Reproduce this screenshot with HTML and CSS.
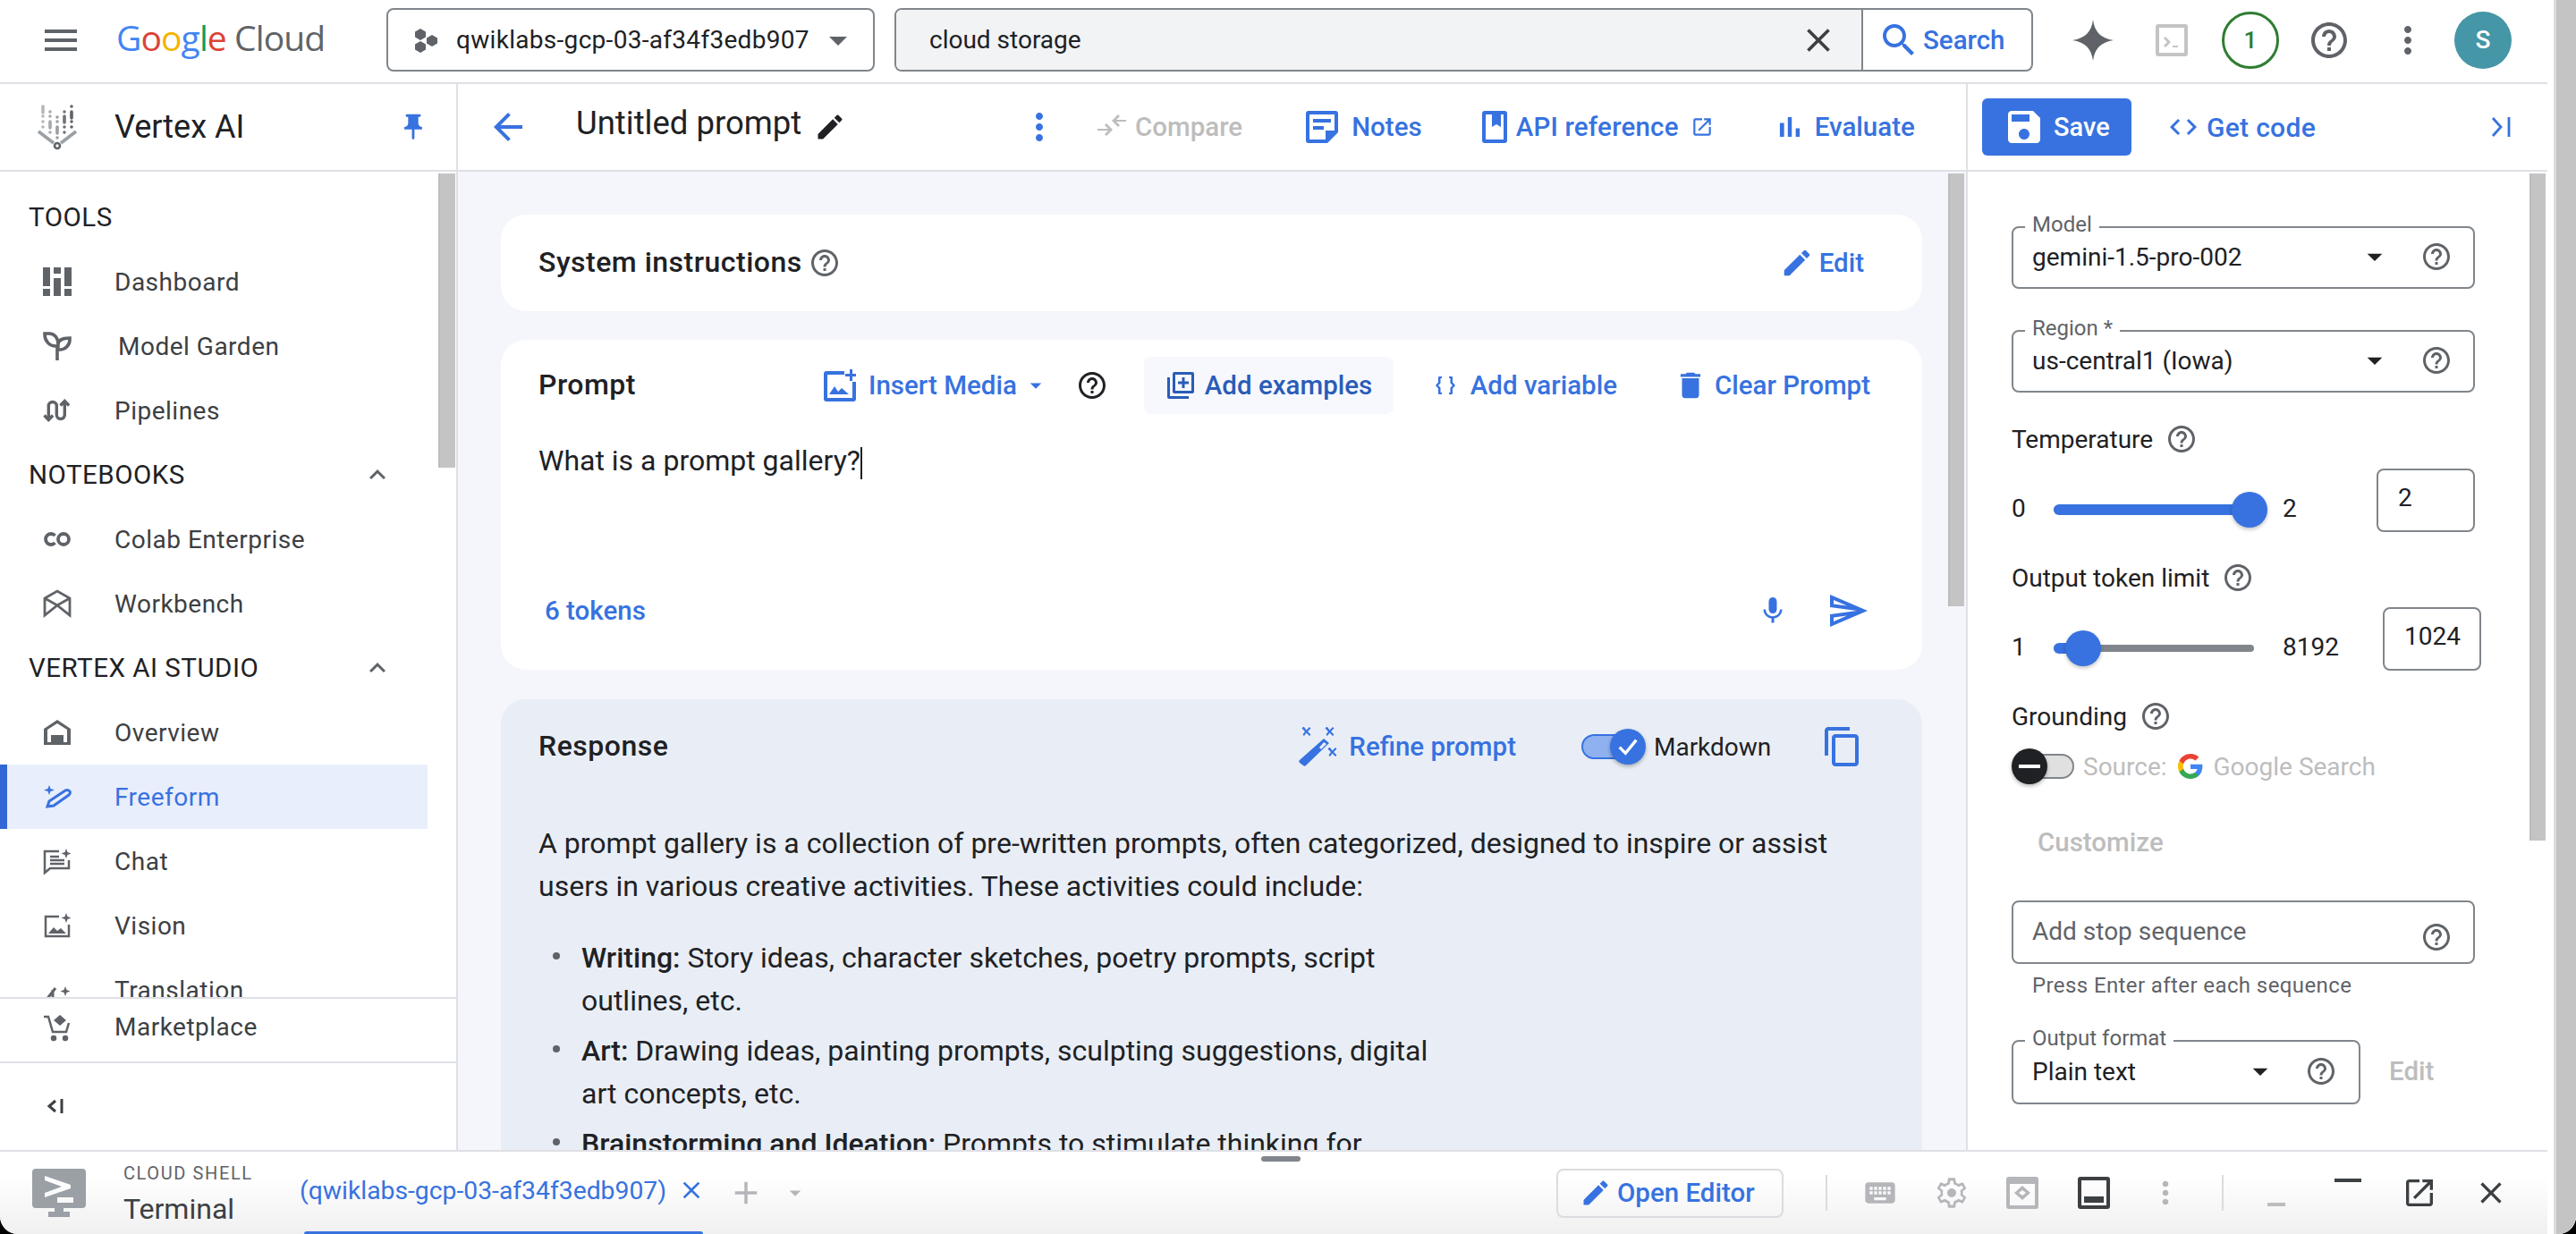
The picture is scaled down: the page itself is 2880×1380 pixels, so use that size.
FILE: index.html
```html
<!DOCTYPE html>
<html lang="en">
<head>
<meta charset="utf-8">
<title>Vertex AI Freeform</title>
<link rel="stylesheet" href="styles.css">
</head>
<body>
<svg class="sprite" xmlns="http://www.w3.org/2000/svg">
<symbol id="i-menu" viewBox="0 0 24 24"><path d="M3 18h18v-2H3v2zm0-5h18v-2H3v2zm0-7v2h18V6H3z"/></symbol>
<symbol id="i-help" viewBox="0 0 24 24"><path d="M11 18h2v-2h-2v2zm1-16C6.48 2 2 6.48 2 12s4.48 10 10 10 10-4.48 10-10S17.52 2 12 2zm0 18c-4.41 0-8-3.59-8-8s3.59-8 8-8 8 3.59 8 8-3.59 8-8 8zm0-14c-2.21 0-4 1.79-4 4h2c0-1.1.9-2 2-2s2 .9 2 2c0 2-3 1.75-3 5h2c0-2.25 3-2.5 3-5 0-2.21-1.79-4-4-4z"/></symbol>
<symbol id="i-more" viewBox="0 0 24 24"><path d="M12 8c1.1 0 2-.9 2-2s-.9-2-2-2-2 .9-2 2 .9 2 2 2zm0 2c-1.1 0-2 .9-2 2s.9 2 2 2 2-.9 2-2-.9-2-2-2zm0 6c-1.1 0-2 .9-2 2s.9 2 2 2 2-.9 2-2-.9-2-2-2z"/></symbol>
<symbol id="i-close" viewBox="0 0 24 24"><path d="M19 6.41L17.59 5 12 10.59 6.41 5 5 6.41 10.59 12 5 17.59 6.41 19 12 13.41 17.59 19 19 17.59 13.41 12z"/></symbol>
<symbol id="i-search" viewBox="0 0 24 24"><path d="M15.5 14h-.79l-.28-.27C15.41 12.59 16 11.11 16 9.5 16 5.91 13.09 3 9.5 3S3 5.91 3 9.5 5.91 16 9.5 16c1.61 0 3.09-.59 4.23-1.57l.27.28v.79l5 4.99L20.49 19l-4.99-5zm-6 0C7.01 14 5 11.99 5 9.5S7.01 5 9.5 5 14 7.01 14 9.5 11.99 14 9.5 14z"/></symbol>
<symbol id="i-edit" viewBox="0 0 24 24"><path d="M3 17.25V21h3.75L17.81 9.94l-3.75-3.75L3 17.25zM20.71 7.04c.39-.39.39-1.02 0-1.41l-2.34-2.34c-.39-.39-1.02-.39-1.41 0l-1.83 1.83 3.75 3.75 1.83-1.83z"/></symbol>
<symbol id="i-back" viewBox="0 0 24 24"><path d="M20 11H7.83l5.59-5.59L12 4l-8 8 8 8 1.41-1.41L7.83 13H20v-2z"/></symbol>
<symbol id="i-drop" viewBox="0 0 24 24"><path d="M7 10l5 5 5-5z"/></symbol>
<symbol id="i-less" viewBox="0 0 24 24"><path d="M12 8l-6 6 1.41 1.41L12 10.83l4.59 4.58L18 14z"/></symbol>
<symbol id="i-pin" viewBox="0 0 24 24"><path d="M16 9V4h1c.55 0 1-.45 1-1s-.45-1-1-1H7c-.55 0-1 .45-1 1s.45 1 1 1h1v5c0 1.66-1.34 3-3 3v2h5.97v7l1 1 1-1v-7H19v-2c-1.66 0-3-1.34-3-3z"/></symbol>
<symbol id="i-delete" viewBox="0 0 24 24"><path d="M6 19c0 1.1.9 2 2 2h8c1.1 0 2-.9 2-2V7H6v12zM19 4h-3.5l-1-1h-5l-1 1H5v2h14V4z"/></symbol>
<symbol id="i-send" viewBox="0 0 24 24"><path d="M4.01 6.03l7.51 3.22-7.52-1 .01-2.22m7.5 8.72L4 17.97v-2.22l7.51-1M2.01 3L2 10l15 2-15 2 .01 7L23 12 2.01 3z"/></symbol>
<symbol id="i-mic" viewBox="0 0 24 24"><path d="M12 14c1.66 0 2.99-1.34 2.99-3L15 5c0-1.66-1.34-3-3-3S9 3.34 9 5v6c0 1.66 1.34 3 3 3zm5.3-3c0 3-2.54 5.1-5.3 5.1S6.7 14 6.7 11H5c0 3.41 2.72 6.23 6 6.72V21h2v-3.28c3.28-.48 6-3.3 6-6.72h-1.7z"/></symbol>
<symbol id="i-copy" viewBox="0 0 24 24"><path d="M16 1H4c-1.1 0-2 .9-2 2v14h2V3h12V1zm3 4H8c-1.1 0-2 .9-2 2v14c0 1.1.9 2 2 2h11c1.1 0 2-.9 2-2V7c0-1.1-.9-2-2-2zm0 16H8V7h11v14z"/></symbol>
<symbol id="i-save" viewBox="0 0 24 24"><path d="M17 3H5c-1.11 0-2 .9-2 2v14c0 1.1.89 2 2 2h14c1.1 0 2-.9 2-2V7l-4-4zm-5 16c-1.66 0-3-1.34-3-3s1.34-3 3-3 3 1.34 3 3-1.34 3-3 3zm3-10H5V5h10v4z"/></symbol>
<symbol id="i-code" viewBox="0 0 24 24"><path d="M9.4 16.6L4.8 12l4.6-4.6L8 6l-6 6 6 6 1.4-1.4zm5.2 0l4.6-4.6-4.6-4.6L16 6l6 6-6 6-1.4-1.4z"/></symbol>
<symbol id="i-chart" viewBox="0 0 24 24"><path d="M5 9.2h3V19H5zM10.6 5h2.8v14h-2.8zm5.6 8H19v6h-2.8z"/></symbol>
<symbol id="i-open" viewBox="0 0 24 24"><path d="M19 19H5V5h7V3H5c-1.11 0-2 .9-2 2v14c0 1.1.89 2 2 2h14c1.1 0 2-.9 2-2v-7h-2v7zM14 3v2h3.59l-9.83 9.83 1.41 1.41L19 6.41V10h2V3h-7z"/></symbol>
<symbol id="i-settings" viewBox="0 0 24 24"><path fill-rule="evenodd" d="M19.43 12.98c.04-.32.07-.64.07-.98 0-.34-.03-.66-.07-.98l2.11-1.65c.19-.15.24-.42.12-.64l-2-3.46c-.09-.16-.26-.25-.44-.25-.06 0-.12.01-.17.03l-2.49 1c-.52-.4-1.08-.73-1.69-.98l-.38-2.65C14.46 2.18 14.25 2 14 2h-4c-.25 0-.46.18-.49.42l-.38 2.65c-.61.25-1.17.59-1.69.98l-2.49-1c-.06-.02-.12-.03-.18-.03-.17 0-.34.09-.43.25l-2 3.46c-.13.22-.07.49.12.64l2.11 1.65c-.04.32-.07.65-.07.98 0 .33.03.66.07.98l-2.11 1.65c-.19.15-.24.42-.12.64l2 3.46c.09.16.26.25.44.25.06 0 .12-.01.17-.03l2.49-1c.52.4 1.08.73 1.69.98l.38 2.65c.03.24.24.42.49.42h4c.25 0 .46-.18.49-.42l.38-2.65c.61-.25 1.17-.59 1.69-.98l2.49 1c.06.02.12.03.18.03.17 0 .34-.09.43-.25l2-3.46c.12-.22.07-.49-.12-.64l-2.11-1.65zM18 12c0 .3-.03.6-.08.9l-.14.8 2.1 1.6-1 1.7-2.4-1-.7.5c-.5.4-1 .7-1.6.9l-.8.3-.38 2.4h-2l-.36-2.4-.8-.3c-.6-.2-1.1-.5-1.6-.9l-.7-.5-2.4 1-1-1.7 2.1-1.6-.14-.8c-.05-.3-.08-.6-.08-.9s.03-.6.08-.9l.14-.8-2.1-1.6 1-1.7 2.4 1 .7-.5c.5-.4 1-.7 1.6-.9l.8-.3.36-2.4h2l.38 2.4.8.3c.6.2 1.1.5 1.6.9l.7.5 2.4-1 1 1.7-2.1 1.6.14.8c.05.3.08.6.08.9zm-6-3a3 3 0 1 0 0 6 3 3 0 0 0 0-6z"/></symbol>
<symbol id="i-keyboard" viewBox="0 0 24 24"><path d="M20 5H4c-1.1 0-1.99.9-1.99 2L2 17c0 1.1.9 2 2 2h16c1.1 0 2-.9 2-2V7c0-1.1-.9-2-2-2zm-9 3h2v2h-2V8zm0 3h2v2h-2v-2zM8 8h2v2H8V8zm0 3h2v2H8v-2zm-1 2H5v-2h2v2zm0-3H5V8h2v2zm9 7H8v-2h8v2zm0-4h-2v-2h2v2zm0-3h-2V8h2v2zm3 3h-2v-2h2v2zm0-3h-2V8h2v2z"/></symbol>
<symbol id="i-add" viewBox="0 0 24 24"><path d="M19 13h-6v6h-2v-6H5v-2h6V5h2v6h6v2z"/></symbol>
<symbol id="i-spark" viewBox="0 0 24 24"><path d="M12 0c.9 7 4.4 10.8 12 12-7.6 1.2-11.1 5-12 12-.9-7-4.4-10.8-12-12C7.6 10.800 11.100 7 12 0z"/></symbol>
<symbol id="i-project" viewBox="0 0 28 28"><path d="M8 1l6 3.500v6L8 14l-6-3.500v-6zM21 8l6 3.500v6L21 21l-6-3.500v-6zM8 15l6 3.500v6L8 28l-6-3.500v-6z"/></symbol>
<symbol id="i-termbox" viewBox="0 0 36 36"><path fill-rule="evenodd" d="M3 0h30a3 3 0 0 1 3 3v30a3 3 0 0 1-3 3H3a3 3 0 0 1-3-3V3a3 3 0 0 1 3-3zm1 4v28h28V4zm5 12l2-2 6 6-6 6-2-2 4-4zm10 8h6v2h-6z"/></symbol>
<symbol id="i-notes" viewBox="0 0 36 36"><path fill-rule="evenodd" d="M3 0h30a3 3 0 0 1 3 3v21L24 36H3a3 3 0 0 1-3-3V3a3 3 0 0 1 3-3zm1 4v28h18v-10h10V4zm4 5h20v4H8zm0 8h12v4H8z"/></symbol>
<symbol id="i-book" viewBox="0 0 28 36"><path fill-rule="evenodd" d="M3 0h22a3 3 0 0 1 3 3v30a3 3 0 0 1-3 3H3a3 3 0 0 1-3-3V3a3 3 0 0 1 3-3zm1 4v28h20V4h-3v14l-5-3-5 3V4z"/></symbol>
<symbol id="i-compare" viewBox="0 0 32 32"><path d="M0 18h12l-4-4 2-2 7 7-7 7-2-2 4-4H0zM32 10H21l4 4-2 2-7-7 7-7 2 2-4 4h11z"/></symbol>
<symbol id="i-media" viewBox="0 0 36 36"><path fill-rule="evenodd" d="M3 2h20v4H4v26h28V14h4v19a3 3 0 0 1-3 3H3a3 3 0 0 1-3-3V5a3 3 0 0 1 3-3zm26-2h3v5h4v3h-4v5h-3V8h-5V5h5zM6 28l6-9 4 6 4-4 8 7z"/></symbol>
<symbol id="i-examples" viewBox="0 0 30 30"><path fill-rule="evenodd" d="M8 0h20a2 2 0 0 1 2 2v20a2 2 0 0 1-2 2H8a2 2 0 0 1-2-2V2a2 2 0 0 1 2-2zm1 3v18h18V3zM0 6h3v21h21v3H2a2 2 0 0 1-2-2zm16.500 0h3v4.500H24v3h-4.500V18h-3v-4.500H12v-3h4.500z"/></symbol>
<symbol id="i-braces" viewBox="0 0 26 26"><path d="M6 3h3v2H7.500v5.500L5 13l2.500 2.500V21H9v2H6a1 1 0 0 1-1-1v-5.500L2 13l3-3.500V4a1 1 0 0 1 1-1zM20 3h-3v2h1.500v5.500L21 13l-2.500 2.500V21H17v2h3a1 1 0 0 0 1-1v-5.500L24 13l-3-3.500V4a1 1 0 0 0-1-1z"/></symbol>
<symbol id="i-wand" viewBox="0 0 44 44"><path fill-rule="evenodd" d="M29 13l6 5L9 43c-1 1-2 1-3 0l-4-3c-1-1-1-2 0-3zm0 4l-5 6 2 2 6-6z"/><path d="M7 0l2.500 3.500L13 0l1.500 1.500L11 5l3.500 3.500L13 10 9.500 6.500 7 10 5.500 8.500 8 5 4.500 1.500 6 0zM33 0l2.500 3.500L39 0l1.500 1.500L37 5l3.500 3.500L39 10l-3.500-3.500L33 10l-1.500-1.500L34 5l-3.500-3.500L32 0zM36 23l2.500 3.500L42 23l1.500 1.500L40 28l3.500 3.500L42 33l-3.500-3.500L36 33l-1.500-1.500L37 28l-3.500-3.500L35 23z"/></symbol>
<symbol id="i-webview" viewBox="0 0 36 36"><path fill-rule="evenodd" d="M3 0h30a3 3 0 0 1 3 3v30a3 3 0 0 1-3 3H3a3 3 0 0 1-3-3V3a3 3 0 0 1 3-3zm1 8v24h28V8zm14 2l9 8-9 8-9-8zm0 5l-4 3 4 3 4-3z"/></symbol>
<symbol id="i-dock" viewBox="0 0 36 36"><path fill-rule="evenodd" d="M3 0h30a3 3 0 0 1 3 3v30a3 3 0 0 1-3 3H3a3 3 0 0 1-3-3V3a3 3 0 0 1 3-3zm1 4v28h28V4zm3 18h22v7H7z"/></symbol>
</svg>

<div class="screen">
  <div class="window">
    <header class="topbar">
      <svg class="ic ic-48 c-grey m-menu"><use href="#i-menu"/></svg>
      <div class="logo"><span class="g-b">G</span><span class="g-r">o</span><span class="g-y">o</span><span class="g-b">g</span><span class="g-g">l</span><span class="g-r">e</span><span class="g-c"> Cloud</span></div>
      <div class="project">
        <svg class="ic project-ic c-grey"><use href="#i-project"/></svg>
        <span class="project-name">qwiklabs-gcp-03-af34f3edb907</span>
        <svg class="ic ic-48 c-grey project-arrow"><use href="#i-drop"/></svg>
      </div>
      <div class="search">
        <div class="search-field">
          <span class="search-text">cloud storage</span>
          <svg class="ic ic-44 c-dark"><use href="#i-close"/></svg>
        </div>
        <div class="search-btn">
          <svg class="ic ic-48 c-blue"><use href="#i-search"/></svg>
          <span>Search</span>
        </div>
      </div>
      <svg class="ic spark c-grey"><use href="#i-spark"/></svg>
      <svg class="ic termbox"><use href="#i-termbox"/></svg>
      <div class="notif">1</div>
      <svg class="ic ic-48 c-grey m-help"><use href="#i-help"/></svg>
      <svg class="ic ic-48 c-grey m-more"><use href="#i-more"/></svg>
      <div class="avatar">S</div>
    </header>

    <div class="work">
      <aside class="left">
        <div class="left-head">
          <svg class="vertex" viewBox="0 0 44 50" fill="none" stroke-linecap="round" stroke-width="3.600">
            <path stroke="#b4b7bb" d="M6 2v7M6 13v0M6 19v0M6 25v0"/>
            <path stroke="#a6a9ae" d="M14 8v0M14 13v0M14 19v7M14 31v0"/>
            <path stroke="#9a9da2" d="M22 14v0M22 19v0M22 25v7M22 37v0"/>
            <path stroke="#6f7378" d="M30 8v0M30 13v7M30 25v0M30 31v0"/>
            <path stroke="#5f6368" d="M38 2v0M38 8v7M38 19v0M38 25v0"/>
            <path stroke="#9aa0a6" stroke-width="3.600" stroke-linecap="butt" d="M1 30l17 13M43 30L26 43"/>
            <circle cx="22" cy="46" r="3" stroke="#5f6368" stroke-width="2.600"/>
          </svg>
          <span class="vertex-name">Vertex AI</span>
          <svg class="ic ic-34 c-blue"><use href="#i-pin"/></svg>
        </div>
        <div class="nav-scroll">
          <nav class="nav">
            <div class="nav-head"><span>TOOLS</span></div>
            <div class="nav-row">
              <svg class="nav-ic" viewBox="0 0 32 32" fill="currentColor"><path d="M0 0h8v21H0zM0 24h8v8H0zM12 0h8v7h-8zM12 12h8v20h-8zM24 0h8v21h-8zM24 24h8v8h-8z"/></svg>
              <span>Dashboard</span>
            </div>
            <div class="nav-row nav-row-garden">
              <svg class="nav-ic" viewBox="0 0 32 32" fill="none" stroke="currentColor" stroke-width="3.600"><path d="M2 2h5c6 0 10 5 10 12v2h-3C7 16 2 10 2 3zM17 14c0-4.500 5-7 13-7v2c0 6-5 11-11 11h-3M16 16v16"/></svg>
              <span>Model Garden</span>
            </div>
            <div class="nav-row">
              <svg class="nav-ic" viewBox="0 0 32 32" fill="none" stroke="currentColor" stroke-width="3.400"><path d="M1.500 21.500l4.800 5 4.800-5M6.300 26V11a4.500 4.500 0 0 1 9 0v10a4.500 4.500 0 0 0 9 0V6M19.500 10.500l4.800-5 4.800 5"/></svg>
              <span>Pipelines</span>
            </div>
            <div class="nav-head"><span>NOTEBOOKS</span><svg class="ic ic-36 c-grey"><use href="#i-less"/></svg></div>
            <div class="nav-row">
              <svg class="nav-ic" viewBox="0 0 32 32" fill="none" stroke="currentColor" stroke-width="3.800"><path d="M13.500 12a6 6 0 1 0 0 8"/><circle cx="23" cy="16" r="6"/></svg>
              <span>Colab Enterprise</span>
            </div>
            <div class="nav-row">
              <svg class="nav-ic" viewBox="0 0 32 32" fill="none" stroke="currentColor" stroke-width="2.800"><path d="M2 29V10l14-8 14 8v19l-14-11zM2 10l14 8 14-8"/></svg>
              <span>Workbench</span>
            </div>
            <div class="nav-head"><span>VERTEX AI STUDIO</span><svg class="ic ic-36 c-grey"><use href="#i-less"/></svg></div>
            <div class="nav-row">
              <svg class="nav-ic" viewBox="0 0 32 32" fill="currentColor"><path fill-rule="evenodd" d="M16 2l15 10v18H1V12zm0 4L5 13v14h4v-8h14v8h4V13z"/><path d="M11 21h10v9H11z"/></svg>
              <span>Overview</span>
            </div>
            <div class="nav-row nav-active">
              <svg class="nav-ic" viewBox="0 0 32 32" fill="none" stroke="currentColor" stroke-width="3"><path d="M5 27l2-6L25 9c2-1 4 0 5 1s0 3-1 4L12 26z"/><path fill="currentColor" stroke="none" d="M7 3l1.500 4L13 8.500 8.500 10 7 14l-1.500-4L1 8.500 5.500 7z"/></svg>
              <span>Freeform</span>
            </div>
            <div class="nav-row">
              <svg class="nav-ic" viewBox="0 0 32 32" fill="none" stroke="currentColor" stroke-width="2.500"><path d="M18 5H2v24l6-5h21v-9M8 11h10M8 15h16M8 19h16"/><path fill="currentColor" stroke="none" d="M26 2l1.500 4 4 1.500-4 1.500-1.500 4-1.500-4-4-1.500 4-1.500z"/></svg>
              <span>Chat</span>
            </div>
            <div class="nav-row">
              <svg class="nav-ic" viewBox="0 0 32 32" fill="none" stroke="currentColor" stroke-width="2.500"><path d="M18 6H3v22h26V15"/><path fill="currentColor" stroke="none" d="M26 2l1.500 4 4 1.500-4 1.500-1.500 4-1.500-4-4-1.500 4-1.500zM6 25l6-7 4 4 4-3 6 6z"/></svg>
              <span>Vision</span>
            </div>
            <div class="nav-row">
              <svg class="nav-ic" viewBox="0 0 32 32" fill="none" stroke="currentColor" stroke-width="3"><path d="M14 14L3 28h12M11 16v16"/><path fill="currentColor" stroke="none" d="M25 12l1.500 4 4 1.500-4 1.500-1.500 4-1.500-4-4-1.500 4-1.500z"/></svg>
              <span>Translation</span>
            </div>
          </nav>
          <div class="scroll-thumb thumb-nav"></div>
        </div>
        <div class="market">
          <svg class="nav-ic" viewBox="0 0 32 32" fill="none" stroke="currentColor" stroke-width="2.500"><path d="M1 4h5l5 17h15l3-10"/><path fill="currentColor" stroke="none" d="M19 2l7 6-7 6-7-6z"/><circle cx="12" cy="28" r="2" fill="currentColor"/><circle cx="25" cy="28" r="2" fill="currentColor"/></svg>
          <span>Marketplace</span>
        </div>
        <div class="collapse">
          <svg class="collapse-ic" viewBox="0 0 20 20" fill="none" stroke="#3c4043" stroke-width="3"><path d="M10 4L3 10l7 6M17 2v16"/></svg>
        </div>
      </aside>

      <main class="center">
        <div class="toolbar">
          <svg class="ic ic-48 c-blue m-back"><use href="#i-back"/></svg>
          <span class="title">Untitled prompt</span>
          <svg class="ic ic-36 c-black m-title-edit"><use href="#i-edit"/></svg>
          <svg class="ic ic-48 c-blue m-vert"><use href="#i-more"/></svg>
          <div class="tool tool-compare"><svg class="ic ic-32"><use href="#i-compare"/></svg><span>Compare</span></div>
          <div class="tool tool-notes"><svg class="ic ic-36"><use href="#i-notes"/></svg><span>Notes</span></div>
          <div class="tool tool-api"><svg class="ic book"><use href="#i-book"/></svg><span class="api-label">API reference</span><svg class="ic ic-26 m-ext"><use href="#i-open"/></svg></div>
          <div class="tool tool-eval"><svg class="ic ic-38"><use href="#i-chart"/></svg><span>Evaluate</span></div>
        </div>
        <div class="center-scroll">
          <section class="card card-system">
            <h2 class="card-title">System instructions</h2>
            <svg class="ic ic-36 c-grey m-sys-help"><use href="#i-help"/></svg>
            <div class="tool tool-edit"><svg class="ic ic-38"><use href="#i-edit"/></svg><span>Edit</span></div>
          </section>
          <section class="card card-prompt">
            <div class="prompt-head">
              <h2 class="card-title">Prompt</h2>
              <div class="prompt-actions">
                <div class="tool"><svg class="ic ic-36"><use href="#i-media"/></svg><span>Insert Media</span><svg class="ic ic-30 m-media-drop"><use href="#i-drop"/></svg></div>
                <svg class="ic ic-36 c-black m-prompt-help"><use href="#i-help"/></svg>
                <div class="tool tool-examples"><svg class="ic ic-30"><use href="#i-examples"/></svg><span>Add examples</span></div>
                <div class="tool tool-var"><svg class="ic ic-26"><use href="#i-braces"/></svg><span>Add variable</span></div>
                <div class="tool tool-clear"><svg class="ic ic-38 m-del"><use href="#i-delete"/></svg><span>Clear Prompt</span></div>
              </div>
            </div>
            <p class="prompt-text">What is a prompt gallery?<span class="caret"></span></p>
            <div class="prompt-foot">
              <span class="tokens">6 tokens</span>
              <svg class="ic ic-36 c-blue"><use href="#i-mic"/></svg>
              <svg class="ic ic-48 c-blue m-send"><use href="#i-send"/></svg>
            </div>
          </section>
          <section class="card card-response">
            <div class="resp-head">
              <h2 class="card-title">Response</h2>
              <div class="tool tool-refine"><svg class="ic wand"><use href="#i-wand"/></svg><span>Refine prompt</span></div>
              <div class="md-toggle">
                <span class="md-track"></span>
                <span class="md-thumb"><svg viewBox="0 0 24 24" class="md-check" fill="none" stroke="#fff" stroke-width="2.500"><path d="M5 12.500l5 5 9-11"/></svg></span>
              </div>
              <span class="md-label">Markdown</span>
              <svg class="ic copy c-blue"><use href="#i-copy"/></svg>
            </div>
            <div class="resp-body">
              <p class="resp-p">A prompt gallery is a collection of pre-written prompts, often categorized, designed to inspire or assist<br>users in various creative activities. These activities could include:</p>
              <ul class="resp-list">
                <li><b>Writing:</b> Story ideas, character sketches, poetry prompts, script<br>outlines, etc.</li>
                <li><b>Art:</b> Drawing ideas, painting prompts, sculpting suggestions, digital<br>art concepts, etc.</li>
                <li><b>Brainstorming and Ideation:</b> Prompts to stimulate thinking for</li>
              </ul>
            </div>
          </section>
          <div class="scroll-thumb thumb-center"></div>
        </div>
      </main>

      <aside class="right">
        <div class="right-bar">
          <div class="save"><svg class="ic ic-48"><use href="#i-save"/></svg><span>Save</span></div>
          <div class="tool tool-code"><svg class="ic ic-36"><use href="#i-code"/></svg><span>Get code</span></div>
          <svg class="panel-close" viewBox="0 0 24 24" fill="none" stroke="#3772e0" stroke-width="2.800"><path d="M3 2l9 10-9 10M21 1v22"/></svg>
        </div>
        <div class="right-scroll">
          <div class="field field-model">
            <label class="field-label">Model</label>
            <span class="field-value">gemini-1.5-pro-002</span>
            <svg class="ic ic-40 c-black"><use href="#i-drop"/></svg>
            <svg class="ic ic-36 c-grey m-field-help"><use href="#i-help"/></svg>
          </div>
          <div class="field field-region">
            <label class="field-label">Region *</label>
            <span class="field-value">us-central1 (Iowa)</span>
            <svg class="ic ic-40 c-black"><use href="#i-drop"/></svg>
            <svg class="ic ic-36 c-grey m-field-help"><use href="#i-help"/></svg>
          </div>
          <div class="param param-temp"><span>Temperature</span><svg class="ic ic-36 c-grey"><use href="#i-help"/></svg></div>
          <div class="slider-row">
            <span class="s-min">0</span>
            <div class="slider"><span class="s-track"></span><span class="s-fill fill-full"></span><span class="s-thumb thumb-full"></span></div>
            <span class="s-max max-a">2</span>
            <div class="num-box">2</div>
          </div>
          <div class="param"><span>Output token limit</span><svg class="ic ic-36 c-grey"><use href="#i-help"/></svg></div>
          <div class="slider-row">
            <span class="s-min">1</span>
            <div class="slider"><span class="s-track"></span><span class="s-fill fill-low"></span><span class="s-thumb thumb-low"></span></div>
            <span class="s-max max-b">8192</span>
            <div class="num-box">1024</div>
          </div>
          <div class="param"><span>Grounding</span><svg class="ic ic-36 c-grey"><use href="#i-help"/></svg></div>
          <div class="ground">
            <div class="g-toggle"><span class="g-track"></span><span class="g-thumb"></span></div>
            <span class="g-src">Source:</span>
            <svg class="g-logo" viewBox="0 0 24 24"><path fill="#4285F4" d="M23.490 12.270c0-.790-.070-1.540-.190-2.270H12v4.510h6.470c-.290 1.480-1.140 2.730-2.400 3.580v3h3.860c2.260-2.090 3.560-5.170 3.560-8.820z"/><path fill="#34A853" d="M12 24c3.240 0 5.950-1.080 7.930-2.910l-3.860-3c-1.080.720-2.450 1.160-4.070 1.160-3.130 0-5.780-2.110-6.730-4.960H1.290v3.090C3.260 21.300 7.310 24 12 24z"/><path fill="#FBBC05" d="M5.270 14.290c-.250-.720-.380-1.490-.380-2.290s.140-1.570.380-2.290V6.620H1.290C.470 8.240 0 10.060 0 12s.470 3.760 1.290 5.380l3.980-3.090z"/><path fill="#EA4335" d="M12 4.750c1.770 0 3.350.610 4.600 1.800l3.420-3.420C17.950 1.190 15.240 0 12 0 7.310 0 3.260 2.700 1.290 6.620l3.980 3.090C6.220 6.860 8.870 4.750 12 4.750z"/></svg>
            <span class="g-src">Google Search</span>
          </div>
          <div class="customize">Customize</div>
          <div class="field field-stop">
            <span class="field-value v-muted">Add stop sequence</span>
            <svg class="ic ic-36 c-grey m-stop-help"><use href="#i-help"/></svg>
          </div>
          <div class="hint">Press Enter after each sequence</div>
          <div class="format-row">
            <div class="field field-format">
              <label class="field-label">Output format</label>
              <span class="field-value">Plain text</span>
              <svg class="ic ic-40 c-black"><use href="#i-drop"/></svg>
              <svg class="ic ic-36 c-grey m-format-help"><use href="#i-help"/></svg>
            </div>
            <span class="format-edit">Edit</span>
          </div>
          <div class="scroll-thumb thumb-right"></div>
        </div>
      </aside>
    </div>

    <footer class="shell">
      <span class="handle"></span>
      <svg class="shell-ic" viewBox="0 0 60 54"><path fill="#9aa0a6" fill-rule="evenodd" d="M4 0h52a4 4 0 0 1 4 4v36a4 4 0 0 1-4 4H35v4h7v6H18v-6h7v-4H4a4 4 0 0 1-4-4V4a4 4 0 0 1 4-4zm10 8v5l19 7-19 7v5l29-10v-4zm14 24v6h18v-6z"/></svg>
      <div class="shell-names"><span class="shell-over">CLOUD SHELL</span><span class="shell-term">Terminal</span></div>
      <div class="tab">
        <span>(qwiklabs-gcp-03-af34f3edb907)</span>
        <svg class="ic ic-32 c-blue"><use href="#i-close"/></svg>
        <span class="tab-line"></span>
      </div>
      <svg class="ic ic-42 c-light m-plus"><use href="#i-add"/></svg>
      <svg class="ic ic-30 c-light m-tabdrop"><use href="#i-drop"/></svg>
      <div class="open-editor"><svg class="ic ic-36"><use href="#i-edit"/></svg><span>Open Editor</span></div>
      <span class="vsep sep-a"></span>
      <svg class="ic ic-40 c-light m-kb"><use href="#i-keyboard"/></svg>
      <svg class="ic ic-40 c-light m-shell"><use href="#i-settings"/></svg>
      <svg class="ic ic-36 c-light m-web"><use href="#i-webview"/></svg>
      <svg class="ic ic-36 c-shell m-dock"><use href="#i-dock"/></svg>
      <svg class="ic ic-40 c-light m-dots"><use href="#i-more"/></svg>
      <span class="vsep sep-b"></span>
      <span class="dash dash-min"></span>
      <span class="dash dash-max"></span>
      <svg class="ic ic-40 c-shell m-popout"><use href="#i-open"/></svg>
      <svg class="ic ic-40 c-shell m-shell-close"><use href="#i-close"/></svg>
    </footer>
  </div>
  <div class="gutter"><span class="page-thumb"></span></div>
</div>
</body>
</html>
```
FILE: styles.css
```css
* { box-sizing: border-box; }
html, body { margin: 0; padding: 0; }
body { width: 2880px; height: 1380px; overflow: hidden; background: #000; font-family: Roboto, "Liberation Sans", sans-serif; font-size: 28px; color: #202124; }
.sprite { width: 0; height: 0; position: absolute; }
h2, p, ul { margin: 0; padding: 0; }

.screen { display: flex; width: 2880px; height: 1380px; background: #fff; border-radius: 0 0 20px 20px; overflow: hidden; }
.window { width: 2848px; height: 1380px; display: flex; flex-direction: column; flex: none; }
.gutter { flex: 1; display: flex; justify-content: flex-end; background: #fff; }
.page-thumb { width: 25px; background: #c4c4c4; border-left: 3px solid #dcdcdc; }

.ic { fill: currentColor; flex: none; display: block; }
.ic-26 { width: 26px; height: 26px; }
.ic-30 { width: 30px; height: 30px; }
.ic-32 { width: 32px; height: 32px; }
.ic-34 { width: 34px; height: 34px; }
.ic-36 { width: 36px; height: 36px; }
.ic-38 { width: 38px; height: 38px; }
.ic-40 { width: 40px; height: 40px; }
.ic-42 { width: 42px; height: 42px; }
.ic-44 { width: 44px; height: 44px; }
.ic-48 { width: 48px; height: 48px; }
.c-grey { color: #5f6368; }
.c-dark { color: #3c4043; }
.c-blue { color: #3772e0; }
.c-black { color: #202124; }
.c-light { color: #b4b6b9; }
.c-shell { color: #3c4043; }

/* top bar */
.topbar { height: 94px; flex: none; border-bottom: 2px solid #dfe0e5; display: flex; align-items: center; padding-bottom: 3px; }
.m-menu { margin-left: 44px; }
.logo { margin-left: 38px; width: 232px; font-family: "Open Sans", sans-serif; font-size: 39px; letter-spacing: -.9px; white-space: pre; flex: none; padding-bottom: 6px; }
.g-b { color: #4285f4; } .g-r { color: #db4437; } .g-y { color: #f4b400; } .g-g { color: #0f9d58; } .g-c { color: #5f6368; }
.project { margin-left: 70px; width: 546px; height: 71px; border: 2px solid #80868b; border-radius: 8px; display: flex; align-items: center; flex: none; }
.project-ic { width: 28px; height: 28px; margin-left: 28px; }
.project-name { margin-left: 20px; width: 394px; white-space: nowrap; letter-spacing: .3px; }
.project-arrow { margin-left: 9px; }
.search { margin-left: 22px; width: 1273px; height: 71px; border: 2px solid #80868b; border-radius: 8px; display: flex; overflow: hidden; flex: none; }
.search-field { width: 1081px; background: #f1f3f4; border-right: 2px solid #80868b; display: flex; align-items: center; justify-content: space-between; padding: 0 26px 0 37px; }
.search-btn { flex: 1; display: flex; align-items: center; padding-left: 16px; gap: 3px; color: #3772e0; font-weight: 500; font-size: 29.500px; }
.spark { width: 46px; height: 46px; margin-left: 44px; }
.termbox { width: 36px; height: 36px; margin-left: 47px; color: #c4c4c4; }
.notif { width: 64px; height: 64px; margin-left: 38px; border: 3px solid #2e7d32; border-radius: 50%; color: #2e7d32; display: flex; align-items: center; justify-content: center; font-weight: 500; font-size: 26px; flex: none; }
.m-help { margin-left: 32px; }
.m-more { margin-left: 40px; }
.avatar { width: 64px; height: 64px; margin-left: 28px; border-radius: 50%; background: #4596a6; color: #fff; display: flex; align-items: center; justify-content: center; font-weight: 500; flex: none; }

/* work area */
.work { flex: 1; min-height: 0; display: flex; }
.left { width: 512px; flex: none; border-right: 2px solid #dfe0e5; display: flex; flex-direction: column; }
.left-head { height: 98px; flex: none; border-bottom: 2px solid #dfe0e5; display: flex; align-items: center; padding-left: 42px; }
.vertex { width: 44px; height: 50px; flex: none; overflow: visible; }
.vertex-name { margin-left: 42px; font-size: 36px; width: 317px; flex: none; }
.nav-scroll { flex: 1; min-height: 0; position: relative; overflow: hidden; }
.nav { padding-top: 15px; width: 478px; }
.nav-head { height: 72px; display: flex; align-items: center; justify-content: space-between; padding: 0 38px 0 32px; font-size: 29.500px; color: #202124; letter-spacing: .5px; }
.nav-row { height: 72px; display: flex; align-items: center; padding-left: 48px; font-size: 28px; color: #3c4043; letter-spacing: .5px; }
.nav-row span { margin-left: 48px; }
.nav-row-garden span { margin-left: 52px; }
.nav-ic { width: 32px; height: 32px; flex: none; color: #5f6368; }
.nav-active { background: #e8eefc; border-left: 8px solid #3367d6; padding-left: 40px; color: #3772e0; }
.nav-active .nav-ic { color: #3772e0; }
.scroll-thumb { position: absolute; background: #c4c4c4; border-left: 2px solid #bcbcbc; }
.thumb-nav { left: 490px; width: 19px; top: 2px; height: 329px; }
.market { height: 74px; flex: none; border-top: 2px solid #dfe0e5; border-bottom: 2px solid #dfe0e5; display: flex; align-items: center; padding: 0 0 7px 48px; font-size: 28px; color: #3c4043; letter-spacing: .5px; }
.market span { margin-left: 48px; }
.collapse { height: 97px; flex: none; display: flex; align-items: center; padding: 0 0 2px 52px; }
.collapse-ic { width: 20px; height: 20px; }

.center { width: 1688px; flex: none; border-right: 2px solid #dfe0e5; display: flex; flex-direction: column; background: #f4f6fb; }
.toolbar { height: 98px; flex: none; background: #fff; border-bottom: 2px solid #dfe0e5; display: flex; align-items: center; padding-left: 32px; }
.m-back { margin-right: 52px; }
.title { font-size: 36.500px; width: 256px; white-space: nowrap; padding-bottom: 10px; }
.m-title-edit { margin-left: 10px; }
.m-vert { margin-left: 192px; }
.tool { display: flex; align-items: center; color: #3772e0; font-weight: 500; font-size: 29.500px; white-space: nowrap; flex: none; }
.tool-compare { margin-left: 41px; color: #bdbdbd; gap: 10px; }
.tool-notes { margin-left: 71px; gap: 15px; }
.tool-api { margin-left: 67px; gap: 10px; }
.api-label { letter-spacing: .2px; }
.book { width: 28px; height: 36px; }
.m-ext { margin-left: 3px; }
.tool-eval { margin-left: 66px; gap: 9px; }

.center-scroll { flex: 1; min-height: 0; position: relative; overflow: hidden; padding: 48px 0 0 48px; }
.thumb-center { left: 1666px; width: 18px; top: 2px; height: 484px; }
.card { width: 1589px; background: #fff; border-radius: 28px; padding-left: 42px; }
.card-title { font-size: 32px; font-weight: 500; color: #202124; letter-spacing: .5px; padding-bottom: 2px; }
.card-system { height: 108px; display: flex; align-items: center; }
.m-sys-help { margin-left: 7px; }
.tool-edit { margin-left: auto; margin-right: 65px; gap: 6px; }
.card-prompt { height: 369px; margin-top: 32px; padding-top: 19px; }
.prompt-head { height: 64px; display: flex; align-items: center; justify-content: space-between; padding-right: 58px; }
.prompt-actions { display: flex; align-items: center; }
.prompt-actions > .tool:first-child { gap: 14px; }
.m-media-drop { margin-left: -8px; }
.m-prompt-help { margin-left: 30px; }
.tool-examples { margin-left: 40px; height: 64px; width: 279px; padding-left: 26px; gap: 12px; background: #f6f8fd; border-radius: 8px; color: #2a5cb8; }
.tool-var { margin-left: 45px; gap: 15px; }
.tool-clear { margin-left: 69px; gap: 8px; }
.m-del { margin-left: -6px; }
.prompt-text { margin-top: 28px; line-height: 48px; font-size: 32px; }
.caret { display: inline-block; width: 2px; height: 36px; background: #202124; vertical-align: middle; }
.prompt-foot { margin-top: 120px; display: flex; align-items: center; height: 48px; padding-left: 7px; }
.tokens { color: #3772e0; font-weight: 500; font-size: 29.500px; width: 1355px; }
.m-send { margin-left: 42px; }
.card-response { height: 640px; margin-top: 33px; background: #e9eef6; overflow: hidden; }
.resp-head { height: 106px; display: flex; align-items: center; }
.tool-refine { margin-left: 704px; gap: 13px; }
.wand { width: 44px; height: 44px; }
.md-toggle { position: relative; width: 72px; height: 40px; margin-left: 73px; flex: none; }
.md-track { position: absolute; left: 0; top: 6px; width: 58px; height: 28px; background: #8fb1f0; border: 2px solid #3772e0; border-radius: 14px; }
.md-thumb { position: absolute; right: 0; top: 0; width: 40px; height: 40px; border-radius: 50%; background: #3772e0; box-shadow: 0 2px 4px rgba(0,0,0,.3); display: flex; align-items: center; justify-content: center; }
.md-check { width: 32px; height: 32px; }
.md-label { margin-left: 9px; font-size: 28px; }
.copy { width: 48px; height: 48px; margin-left: 56px; }
.resp-body { font-size: 32px; line-height: 48px; padding-top: 31px; }
.resp-p { white-space: nowrap; }
.resp-list { list-style: none; margin-top: 32px; }
.resp-list li { position: relative; padding-left: 48px; margin-bottom: 8px; white-space: nowrap; }
.resp-list li::before { content: ""; position: absolute; left: 16px; top: 18px; width: 8px; height: 8px; border-radius: 50%; background: #5f6368; }
.resp-list b { font-weight: 500; }

.right { flex: 1; min-width: 0; display: flex; flex-direction: column; }
.right-bar { height: 98px; flex: none; border-bottom: 2px solid #dfe0e5; display: flex; align-items: center; padding-left: 16px; }
.save { width: 167px; height: 64px; background: #3772e0; border-radius: 6px; color: #fff; display: flex; align-items: center; padding-left: 23px; gap: 9px; font-weight: 500; font-size: 29px; flex: none; }
.tool-code { margin-left: 40px; gap: 8px; font-size: 30px; letter-spacing: .3px; }
.panel-close { width: 24px; height: 24px; margin-left: 195px; flex: none; }
.right-scroll { flex: 1; min-height: 0; position: relative; overflow: hidden; padding: 61px 0 0 49px; }
.thumb-right { left: 628px; width: 18px; top: 2px; height: 746px; }
.field { position: relative; width: 518px; height: 70px; border: 2px solid #80868b; border-radius: 8px; display: flex; align-items: center; padding: 0 0 2px 21px; }
.field-label { position: absolute; left: 13px; top: -18px; padding: 0 8px; background: #fff; font-size: 24px; line-height: 28px; color: #5f6368; }
.field-value { font-size: 28px; width: 363px; white-space: nowrap; flex: none; }
.field-region { margin-top: 46px; }
.m-field-help { margin-left: 31px; }
.v-muted { color: #5f6368; }
.m-stop-help { margin-left: 71px; margin-top: 12px; }
.param { height: 36px; margin-top: 34px; display: flex; align-items: center; gap: 14px; font-size: 28px; padding-bottom: 2px; }
.param-temp { margin-top: 35px; }
.slider-row { height: 71px; display: flex; align-items: flex-start; margin-top: 14px; }
.s-min { width: 47px; margin-top: 28px; font-size: 28px; line-height: 34px; }
.slider { position: relative; width: 224px; height: 40px; margin-top: 26px; flex: none; }
.s-track { position: absolute; left: 0; right: 0; top: 16px; height: 8px; border-radius: 4px; background: #80868b; }
.s-fill { position: absolute; left: 0; top: 14px; height: 12px; border-radius: 6px; background: #3772e0; }
.fill-full { width: 224px; }
.fill-low { width: 32px; }
.s-thumb { position: absolute; top: 0; width: 40px; height: 40px; border-radius: 50%; background: #3772e0; box-shadow: 0 2px 4px rgba(0,0,0,.25); }
.thumb-full { left: 199px; }
.thumb-low { left: 13px; }
.s-max { margin-left: 32px; margin-top: 28px; font-size: 28px; line-height: 34px; }
.max-a { width: 105px; }
.max-b { width: 112px; }
.num-box { width: 110px; height: 71px; border: 2px solid #80868b; border-radius: 8px; padding: 0 0 6px 22px; display: flex; align-items: center; font-size: 28px; flex: none; }
.ground { margin-top: 17px; height: 40px; display: flex; align-items: center; }
.g-toggle { position: relative; width: 70px; height: 40px; flex: none; }
.g-track { position: absolute; left: 3px; top: 6px; width: 67px; height: 28px; background: #e0e0e0; border: 2px solid #80868b; border-radius: 14px; }
.g-thumb { position: absolute; left: 0; top: 0; width: 40px; height: 40px; border-radius: 50%; background: #202124; box-shadow: 0 2px 4px rgba(0,0,0,.3); display: flex; align-items: center; justify-content: center; }
.g-thumb::after { content: ""; width: 24px; height: 4px; background: #fff; }
.g-src { color: #bdbdbd; font-size: 28px; margin-left: 10px; }
.g-logo { width: 28px; height: 28px; margin: 0 2px 0 12px; flex: none; }
.customize { margin-top: 47px; height: 36px; line-height: 36px; padding-left: 29px; color: #bdbdbd; font-weight: 500; font-size: 29.500px; }
.field-stop { margin-top: 47px; height: 71px; }
.hint { margin-top: 8px; padding-left: 23px; font-size: 24px; line-height: 32px; color: #5f6368; letter-spacing: .4px; }
.format-row { margin-top: 45px; display: flex; align-items: center; }
.field-format { width: 390px; height: 72px; flex: none; }
.field-format .field-value { width: 235px; }
.m-format-help { margin-left: 30px; }
.format-edit { margin-left: 32px; margin-bottom: 2px; color: #bdbdbd; font-weight: 500; font-size: 29.500px; }

/* cloud shell */
.shell { height: 94px; flex: none; position: relative; border-top: 2px solid #dfe0e5; background: linear-gradient(#fff 30%, #f0f0f0 100%); display: flex; align-items: center; padding-left: 36px; }
.handle { position: absolute; left: 1410px; top: 5px; width: 44px; height: 6px; border-radius: 3px; background: #80868b; }
.shell-ic { width: 60px; height: 54px; flex: none; }
.shell-names { margin-left: 42px; width: 197px; display: flex; flex-direction: column; flex: none; }
.shell-over { font-size: 20px; line-height: 24px; letter-spacing: 1.600px; color: #5f6368; margin-top: 6px; }
.shell-term { font-size: 32px; line-height: 44px; font-weight: 400; color: #3c4043; margin-top: 6px; }
.tab { position: relative; height: 92px; display: flex; align-items: center; color: #3772e0; font-size: 28.300px; width: 460px; flex: none; padding-bottom: 6px; }
.tab span:first-child { width: 422px; white-space: nowrap; }
.tab-line { position: absolute; left: 5px; bottom: 0; width: 446px; height: 3px; border-radius: 3px 3px 0 0; background: #3772e0; }
.m-plus { margin-left: 18px; }
.m-tabdrop { margin-left: 19px; }
.open-editor { margin-left: 836px; width: 254px; height: 55px; border: 2px solid #dadce0; border-radius: 8px; display: flex; align-items: center; padding-left: 24px; gap: 6px; color: #3772e0; font-weight: 500; font-size: 29.500px; flex: none; }
.vsep { width: 2px; height: 40px; background: #dadce0; flex: none; }
.sep-a { margin-left: 47px; }
.m-kb { margin-left: 39px; }
.m-shell { margin-left: 40px; }
.m-web { margin-left: 41px; }
.m-dock { margin-left: 44px; }
.m-dots { margin-left: 42px; }
.sep-b { margin-left: 43px; }
.dash { display: block; flex: none; height: 4px; }
.dash-min { width: 20px; margin: 26px 0 0 49px; background: #bdbdbd; }
.dash-max { width: 30px; margin: -28px 0 0 55px; background: #3c4043; }
.m-popout { margin-left: 45px; }
.m-shell-close { margin-left: 40px; }
```
